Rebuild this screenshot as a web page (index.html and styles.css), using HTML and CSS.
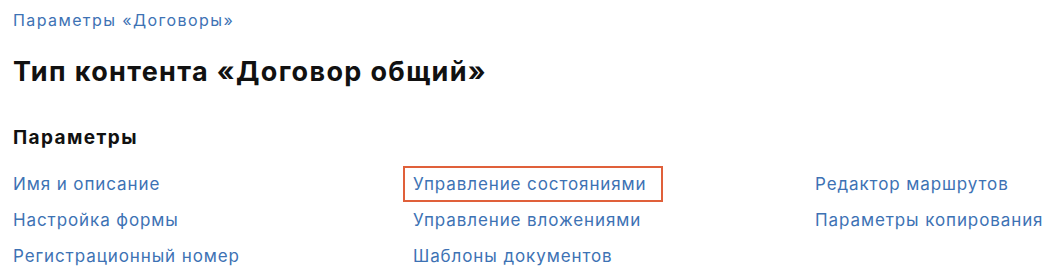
FILE: index.html
```html
<!DOCTYPE html>
<html lang="ru">
<head>
    <meta charset="UTF-8">
    <meta name="viewport" content="width=device-width, initial-scale=1.0">
    <title>Тип контента «Договор общий»</title>
    <link rel="stylesheet" href="styles.css">
</head>
<body>
    <div class="page">
        <a class="breadcrumb" href="#">Параметры «Договоры»</a>
        <h1 class="title">Тип контента «Договор общий»</h1>

        <section class="params">
            <h2 class="params-title">Параметры</h2>
            <div class="params-grid">
                <div class="params-col">
                    <a class="param-link" href="#">Имя и описание</a>
                    <a class="param-link" href="#">Настройка формы</a>
                    <a class="param-link" href="#">Регистрационный номер</a>
                </div>
                <div class="params-col">
                    <a class="param-link active" href="#">Управление состояниями</a>
                    <a class="param-link" href="#">Управление вложениями</a>
                    <a class="param-link" href="#">Шаблоны документов</a>
                </div>
                <div class="params-col">
                    <a class="param-link" href="#">Редактор маршрутов</a>
                    <a class="param-link" href="#">Параметры копирования</a>
                </div>
            </div>
        </section>
    </div>
</body>
</html>
```

FILE: styles.css
```css
body {
    margin: 0;
    font-family: Inter, "Noto Sans", sans-serif;
    background: #fff;
    color: #111;
}

.page {
    padding: 10px 0 0 3px;
}

.breadcrumb {
    display: block;
    margin-left: 10px;
    font-size: 16px;
    line-height: 20px;
    letter-spacing: 1.4px;
    color: #3d72b4;
    text-decoration: none;
}

.title {
    margin: 25px 0 0 10px;
    font-size: 27px;
    line-height: 34px;
    font-weight: 700;
    letter-spacing: 1.35px;
    color: #111;
}

.params {
    margin-top: 37px;
}

.params-title {
    margin: 0 0 16px 10px;
    font-size: 19px;
    line-height: 24px;
    font-weight: 700;
    letter-spacing: 1.4px;
}

.params-grid {
    display: grid;
    grid-template-columns: 400px 402px 1fr;
}

.params-col {
    display: flex;
    flex-direction: column;
    align-items: flex-start;
    min-width: 0;
}

.param-link {
    display: block;
    padding: 6px 14px 6px 8px;
    border: 2px solid transparent;
    font-size: 17px;
    line-height: 20px;
    letter-spacing: 0.9px;
    white-space: nowrap;
    color: #3d72b4;
    text-decoration: none;
}

.param-link.active {
    border-color: #e0603a;
}
```
